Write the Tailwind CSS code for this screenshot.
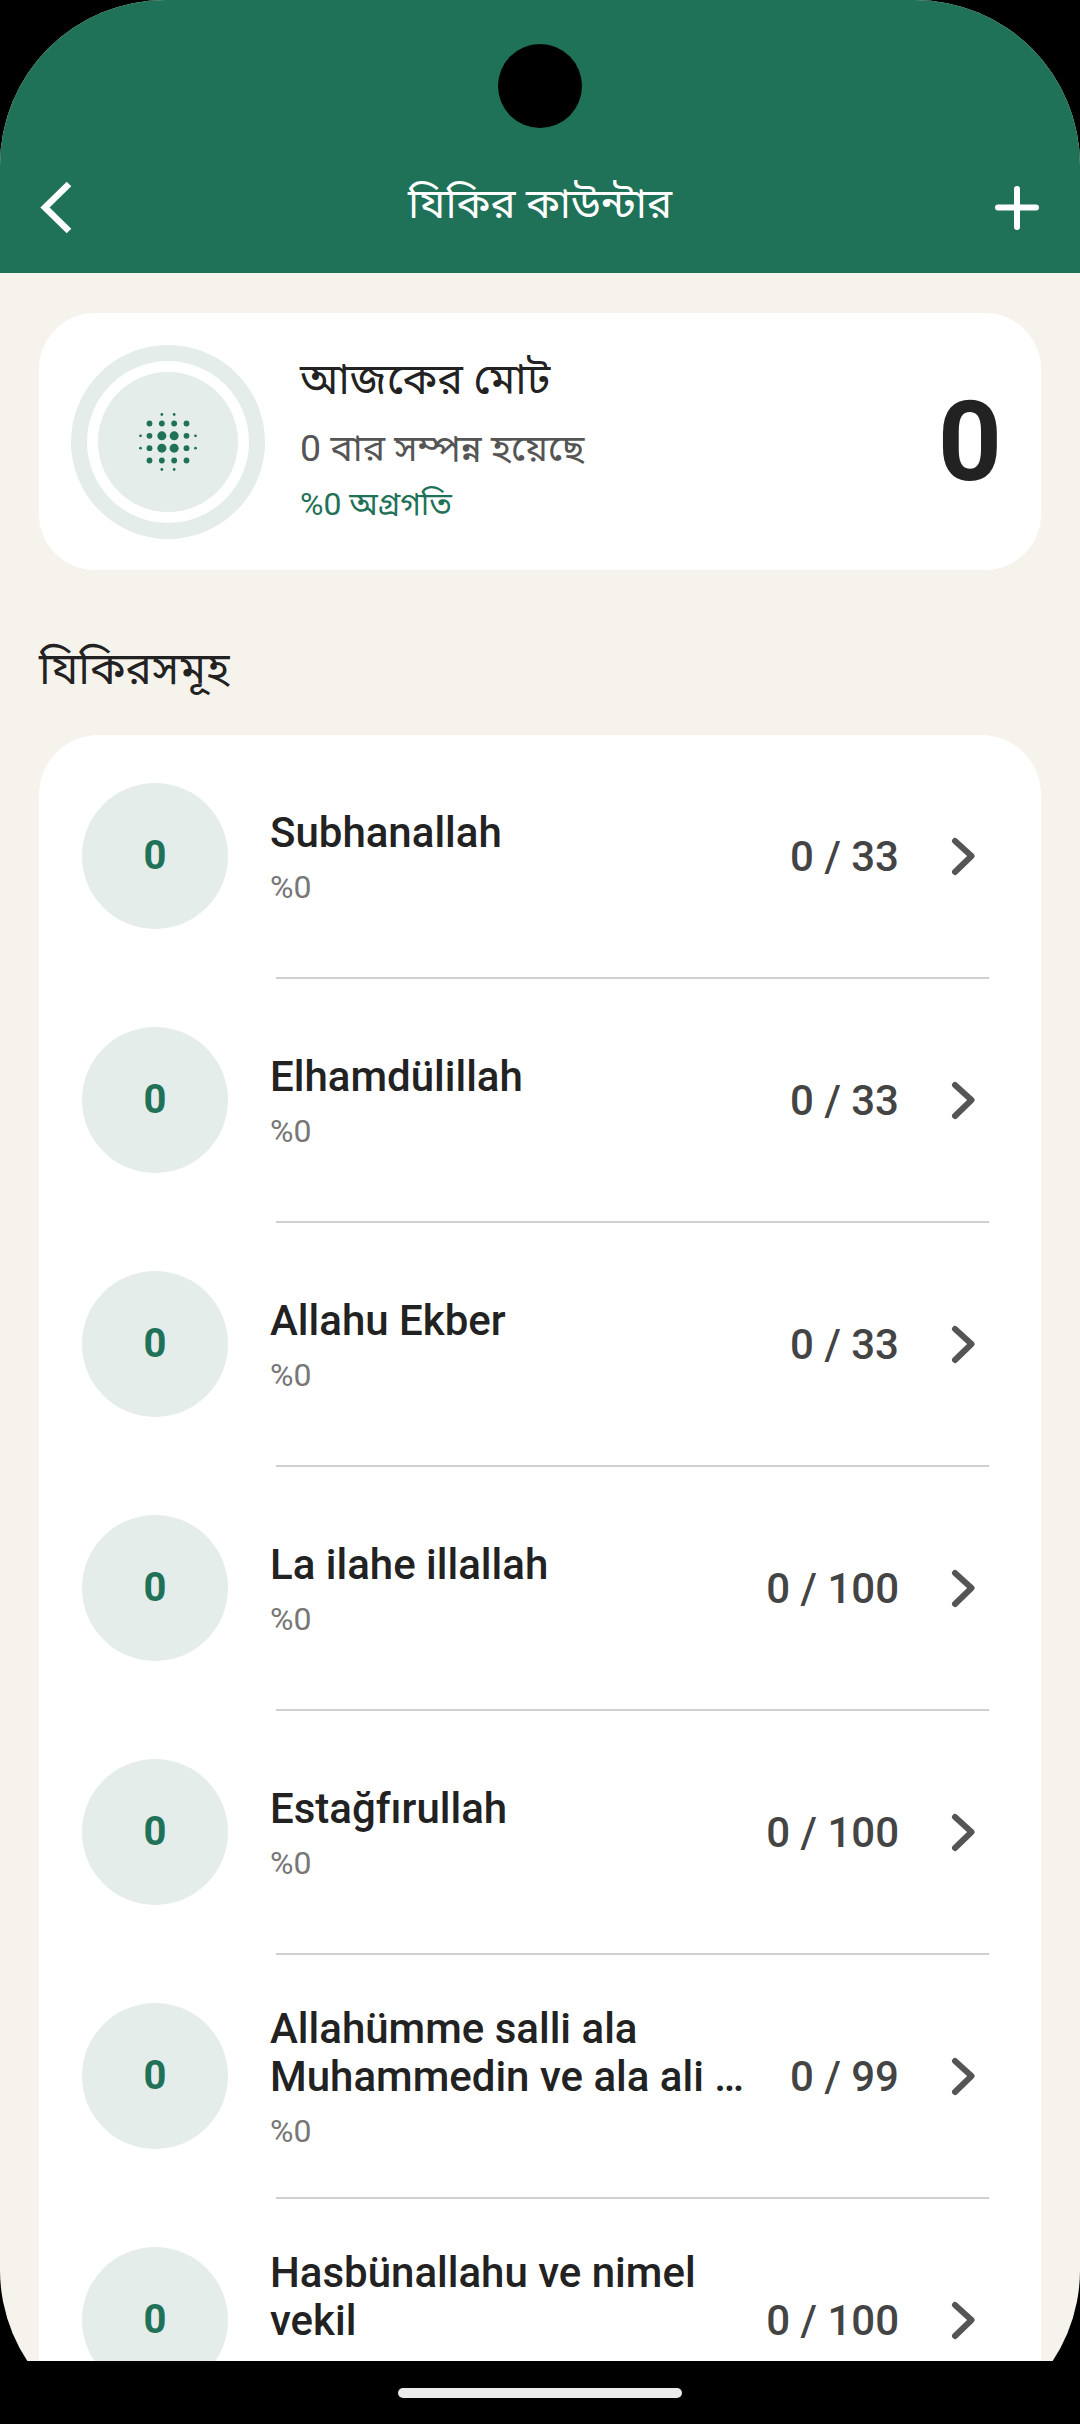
<!doctype html>
<html><head><meta charset="utf-8"><script src="https://cdn.jsdelivr.net/npm/@tailwindcss/browser@4"></script></head>
<body class="bg-black m-0">
<div class="relative w-[1080px] h-[2424px] overflow-hidden bg-black font-['Roboto','Noto_Sans','Noto_Sans_Bengali',sans-serif]">
  <div class="h-[2435px] rounded-[165px] overflow-hidden bg-[#f6f3ec]">
    <header class="h-[273px] bg-[#1f7157] flex items-start pt-[172px] px-[38px] justify-between text-white">
      <div class="w-[50px] h-[70px] flex items-center">
        <svg width="50" height="70" viewBox="38 172 50 70" fill="none" stroke="white" stroke-width="6.5"><path d="M69 184 L45 207.500 L69 231"/></svg>
      </div>
      <h1 class="text-[42px] font-normal leading-[64px]">যিকির কাউন্টার</h1>
      <div class="w-[50px] h-[70px]">
        <svg width="50" height="70" viewBox="992 172 50 70" stroke="white" stroke-width="6" stroke-linecap="round"><path d="M1017 189V227M998 207.500H1036"/></svg>
      </div>
    </header>
    <div class="px-[39px]">
      <section class="mt-[40px] h-[257px] bg-white rounded-[56px] flex items-center pl-[32px] pr-[39px]">
        <div class="w-[194px] h-[194px] rounded-full border-[16px] border-[#e4edea] flex items-center justify-center shrink-0">
          <div class="w-[140px] h-[140px] rounded-full bg-[#e4edea] flex items-center justify-center">
            <svg width="64" height="64" viewBox="-32 -32 64 64" fill="#1f7157">
              <circle cx="-6.150" cy="-27.500" r="1.400"/><circle cx="6.150" cy="-27.500" r="1.400"/>
              <circle cx="-18.500" cy="-18.500" r="2.900"/><circle cx="-6.150" cy="-18.500" r="2.900"/><circle cx="6.150" cy="-18.500" r="2.900"/><circle cx="18.500" cy="-18.500" r="2.900"/>
              <circle cx="-27.500" cy="-6.150" r="1.400"/><circle cx="-18.500" cy="-6.150" r="2.900"/><circle cx="-6.150" cy="-6.150" r="4.500"/><circle cx="6.150" cy="-6.150" r="4.500"/><circle cx="18.500" cy="-6.150" r="2.900"/><circle cx="27.500" cy="-6.150" r="1.400"/>
              <circle cx="-27.500" cy="6.150" r="1.400"/><circle cx="-18.500" cy="6.150" r="2.900"/><circle cx="-6.150" cy="6.150" r="4.500"/><circle cx="6.150" cy="6.150" r="4.500"/><circle cx="18.500" cy="6.150" r="2.900"/><circle cx="27.500" cy="6.150" r="1.400"/>
              <circle cx="-18.500" cy="18.500" r="2.900"/><circle cx="-6.150" cy="18.500" r="2.900"/><circle cx="6.150" cy="18.500" r="2.900"/><circle cx="18.500" cy="18.500" r="2.900"/>
              <circle cx="-6.150" cy="27.500" r="1.400"/><circle cx="6.150" cy="27.500" r="1.400"/>
            </svg>
          </div>
        </div>
        <div class="ml-[35px] flex-1 flex flex-col pb-[7px]">
          <div class="text-[43px] font-[450] leading-[60px] text-[#222]">আজকের মোট</div>
          <div class="text-[37.500px] leading-[60px] mt-[9px] text-[#555]">0 বার সম্পন্ন হয়েছে</div>
          <div class="text-[32px] leading-[48px] mt-[2px] text-[#1f7157]">%0 অগ্রগতি</div>
        </div>
        <div class="text-[112px] font-bold leading-none text-[#222]">0</div>
      </section>
      <h2 class="mt-[67px] mb-[34px] text-[44px] leading-[64px] font-normal text-[#222]">যিকিরসমূহ</h2>
      <section class="bg-white rounded-[60px] pl-[43px] pr-[64px]">
        <div class="flex items-center h-[242px]">
          <div class="w-[146px] h-[146px] shrink-0 rounded-full bg-[#e4edea] flex items-center justify-center text-[40px] font-bold text-[#1f7157]">0</div>
          <div class="ml-[42px] flex-1 min-w-0 pr-[32px] pt-[3px]"><div class="text-[42px] leading-[48px] font-medium text-[#222] line-clamp-2">Subhanallah</div><div class="text-[32px] leading-[40px] mt-[10px] text-[#777]">%0</div></div>
          <div class="text-[42px] font-medium text-[#444] whitespace-nowrap">0 / 33</div>
          <svg class="ml-[49px] mr-[1px]" width="28" height="40" viewBox="0 0 28 40" fill="none" stroke="#555" stroke-width="6" stroke-linecap="round" stroke-linejoin="round"><path d="M7 5L23.500 20L7 36"/></svg>
        </div>
        <div class="ml-[194px] -mr-[12px] h-[2px] bg-[#d0d0d0]"></div>
        <div class="flex items-center h-[242px]">
          <div class="w-[146px] h-[146px] shrink-0 rounded-full bg-[#e4edea] flex items-center justify-center text-[40px] font-bold text-[#1f7157]">0</div>
          <div class="ml-[42px] flex-1 min-w-0 pr-[32px] pt-[3px]"><div class="text-[42px] leading-[48px] font-medium text-[#222] line-clamp-2">Elhamdülillah</div><div class="text-[32px] leading-[40px] mt-[10px] text-[#777]">%0</div></div>
          <div class="text-[42px] font-medium text-[#444] whitespace-nowrap">0 / 33</div>
          <svg class="ml-[49px] mr-[1px]" width="28" height="40" viewBox="0 0 28 40" fill="none" stroke="#555" stroke-width="6" stroke-linecap="round" stroke-linejoin="round"><path d="M7 5L23.500 20L7 36"/></svg>
        </div>
        <div class="ml-[194px] -mr-[12px] h-[2px] bg-[#d0d0d0]"></div>
        <div class="flex items-center h-[242px]">
          <div class="w-[146px] h-[146px] shrink-0 rounded-full bg-[#e4edea] flex items-center justify-center text-[40px] font-bold text-[#1f7157]">0</div>
          <div class="ml-[42px] flex-1 min-w-0 pr-[32px] pt-[3px]"><div class="text-[42px] leading-[48px] font-medium text-[#222] line-clamp-2">Allahu Ekber</div><div class="text-[32px] leading-[40px] mt-[10px] text-[#777]">%0</div></div>
          <div class="text-[42px] font-medium text-[#444] whitespace-nowrap">0 / 33</div>
          <svg class="ml-[49px] mr-[1px]" width="28" height="40" viewBox="0 0 28 40" fill="none" stroke="#555" stroke-width="6" stroke-linecap="round" stroke-linejoin="round"><path d="M7 5L23.500 20L7 36"/></svg>
        </div>
        <div class="ml-[194px] -mr-[12px] h-[2px] bg-[#d0d0d0]"></div>
        <div class="flex items-center h-[242px]">
          <div class="w-[146px] h-[146px] shrink-0 rounded-full bg-[#e4edea] flex items-center justify-center text-[40px] font-bold text-[#1f7157]">0</div>
          <div class="ml-[42px] flex-1 min-w-0 pr-[32px] pt-[3px]"><div class="text-[42px] leading-[48px] font-medium text-[#222] line-clamp-2">La ilahe illallah</div><div class="text-[32px] leading-[40px] mt-[10px] text-[#777]">%0</div></div>
          <div class="text-[42px] font-medium text-[#444] whitespace-nowrap">0 / 100</div>
          <svg class="ml-[49px] mr-[1px]" width="28" height="40" viewBox="0 0 28 40" fill="none" stroke="#555" stroke-width="6" stroke-linecap="round" stroke-linejoin="round"><path d="M7 5L23.500 20L7 36"/></svg>
        </div>
        <div class="ml-[194px] -mr-[12px] h-[2px] bg-[#d0d0d0]"></div>
        <div class="flex items-center h-[242px]">
          <div class="w-[146px] h-[146px] shrink-0 rounded-full bg-[#e4edea] flex items-center justify-center text-[40px] font-bold text-[#1f7157]">0</div>
          <div class="ml-[42px] flex-1 min-w-0 pr-[32px] pt-[3px]"><div class="text-[42px] leading-[48px] font-medium text-[#222] line-clamp-2">Estağfırullah</div><div class="text-[32px] leading-[40px] mt-[10px] text-[#777]">%0</div></div>
          <div class="text-[42px] font-medium text-[#444] whitespace-nowrap">0 / 100</div>
          <svg class="ml-[49px] mr-[1px]" width="28" height="40" viewBox="0 0 28 40" fill="none" stroke="#555" stroke-width="6" stroke-linecap="round" stroke-linejoin="round"><path d="M7 5L23.500 20L7 36"/></svg>
        </div>
        <div class="ml-[194px] -mr-[12px] h-[2px] bg-[#d0d0d0]"></div>
        <div class="flex items-center h-[242px]">
          <div class="w-[146px] h-[146px] shrink-0 rounded-full bg-[#e4edea] flex items-center justify-center text-[40px] font-bold text-[#1f7157]">0</div>
          <div class="ml-[42px] flex-1 min-w-0 pr-[32px] pt-[3px]"><div class="text-[42px] leading-[48px] font-medium text-[#222] line-clamp-2">Allahümme salli ala Muhammedin ve ala ali …</div><div class="text-[32px] leading-[40px] mt-[10px] text-[#777]">%0</div></div>
          <div class="text-[42px] font-medium text-[#444] whitespace-nowrap">0 / 99</div>
          <svg class="ml-[49px] mr-[1px]" width="28" height="40" viewBox="0 0 28 40" fill="none" stroke="#555" stroke-width="6" stroke-linecap="round" stroke-linejoin="round"><path d="M7 5L23.500 20L7 36"/></svg>
        </div>
        <div class="ml-[194px] -mr-[12px] h-[2px] bg-[#d0d0d0]"></div>
        <div class="flex items-center h-[242px]">
          <div class="w-[146px] h-[146px] shrink-0 rounded-full bg-[#e4edea] flex items-center justify-center text-[40px] font-bold text-[#1f7157]">0</div>
          <div class="ml-[42px] flex-1 min-w-0 pr-[32px] pt-[3px]"><div class="text-[42px] leading-[48px] font-medium text-[#222] line-clamp-2">Hasbünallahu ve nimel vekil</div><div class="text-[32px] leading-[40px] mt-[10px] text-[#777]">%0</div></div>
          <div class="text-[42px] font-medium text-[#444] whitespace-nowrap">0 / 100</div>
          <svg class="ml-[49px] mr-[1px]" width="28" height="40" viewBox="0 0 28 40" fill="none" stroke="#555" stroke-width="6" stroke-linecap="round" stroke-linejoin="round"><path d="M7 5L23.500 20L7 36"/></svg>
        </div>
      </section>
    </div>
  </div>
  <div class="absolute left-[498px] top-[44px] w-[84px] h-[84px] rounded-full bg-black"></div>
  <div class="absolute left-0 right-0 top-[2361px] bottom-0 bg-black">
    <div class="absolute left-[398px] top-[27px] w-[284px] h-[10px] rounded-full bg-[#ebebeb]"></div>
  </div>
</div>
</body></html>
